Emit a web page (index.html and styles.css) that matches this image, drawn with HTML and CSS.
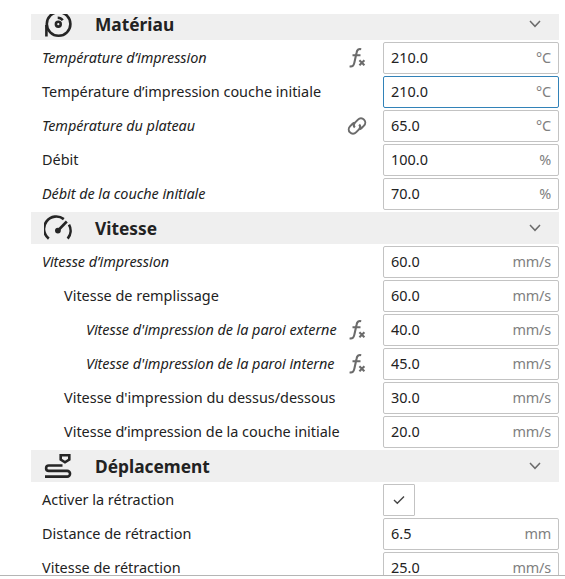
FILE: index.html
```
<!DOCTYPE html>
<html lang="fr">
<head>
  <meta charset="UTF-8">
  <meta name="viewport" content="width=device-width, initial-scale=1.0">
  <title>Paramètres d'impression</title>
  <link rel="stylesheet" href="styles.css">
</head>
<body>
  <svg class="sprite">
    <symbol id="chevron" viewBox="0 0 12 8"><path d="M1 1l5 5.300 5-5.300"/></symbol>
    <symbol id="fx" viewBox="0 0 18 22">
      <path d="M.6 19.300c2.800.6 4.100-.5 4.700-3.400L7.500 6C8.100 2.800 9.500 1.600 12.200 2.200M3.500 8.300h8M10.400 13.300l5 5M15.400 13.300l-5 5"/>
    </symbol>
    <symbol id="link" viewBox="0 0 20 20">
      <path d="M7.800 11.500C6.300 9.800 6.600 8 8 6.600l3-3a4.200 4.200 0 0 1 6 6l-2.600 2.600c-1 1-2 1.300-3.200 1.100M12.200 8.500C13.700 10.200 13.400 12 12 13.400l-3 3a4.200 4.200 0 0 1-6-6l2.600-2.600c1-1 2-1.300 3.200-1.100"/>
    </symbol>
  </svg>

  <div class="settings">
    <div class="list">
      <div class="category">
        <svg class="category-icon" viewBox="0 0 28 28">
          <circle cx="14.600" cy="14" r="11.800"/>
          <path d="M2.400 15v11.500"/>
          <circle cx="14.300" cy="14.200" r="2.400"/>
          <path d="M13.700 7.800c2 0 3.800.8 5 2.400"/>
        </svg>
        <h2>Matériau</h2>
        <svg class="chevron"><use href="#chevron"/></svg>
      </div>
      <div class="setting changed">
        <label>Température d’impression</label>
        <svg class="fx"><use href="#fx"/></svg>
        <div class="field"><span>210.0</span><span class="unit">°C</span></div>
      </div>
      <div class="setting">
        <label>Température d’impression couche initiale</label>
        <div class="field active"><span>210.0</span><span class="unit">°C</span></div>
      </div>
      <div class="setting changed">
        <label>Température du plateau</label>
        <svg class="link"><use href="#link"/></svg>
        <div class="field"><span>65.0</span><span class="unit">°C</span></div>
      </div>
      <div class="setting">
        <label>Débit</label>
        <div class="field"><span>100.0</span><span class="unit">%</span></div>
      </div>
      <div class="setting changed">
        <label>Débit de la couche initiale</label>
        <div class="field"><span>70.0</span><span class="unit">%</span></div>
      </div>

      <div class="category">
        <svg class="category-icon" viewBox="0 0 28 28">
          <path d="M4.800 24.600A12.300 12.300 0 0 1 19.800 5.100M25 10.700A12.300 12.300 0 0 1 23.700 24.600"/>
          <path d="M14 16.500l8.800-9"/>
          <circle class="solid" cx="13.900" cy="16.600" r="2.900"/>
        </svg>
        <h2>Vitesse</h2>
        <svg class="chevron"><use href="#chevron"/></svg>
      </div>
      <div class="setting changed">
        <label>Vitesse d’impression</label>
        <div class="field"><span>60.0</span><span class="unit">mm/s</span></div>
      </div>
      <div class="setting level-1">
        <label>Vitesse de remplissage</label>
        <div class="field"><span>60.0</span><span class="unit">mm/s</span></div>
      </div>
      <div class="setting level-2 changed">
        <label>Vitesse d'impression de la paroi externe</label>
        <svg class="fx"><use href="#fx"/></svg>
        <div class="field"><span>40.0</span><span class="unit">mm/s</span></div>
      </div>
      <div class="setting level-2 changed">
        <label>Vitesse d'impression de la paroi interne</label>
        <svg class="fx"><use href="#fx"/></svg>
        <div class="field"><span>45.0</span><span class="unit">mm/s</span></div>
      </div>
      <div class="setting level-1">
        <label>Vitesse d'impression du dessus/dessous</label>
        <div class="field"><span>30.0</span><span class="unit">mm/s</span></div>
      </div>
      <div class="setting level-1">
        <label>Vitesse d’impression de la couche initiale</label>
        <div class="field"><span>20.0</span><span class="unit">mm/s</span></div>
      </div>

      <div class="category">
        <svg class="category-icon" viewBox="0 0 28 28">
          <path d="M18.500 13.500H4.800a2.700 2.700 0 0 0 0 5.400h18.400a2.800 2.800 0 0 1 0 5.700H1"/>
          <path d="M16.700 3.300h8.600v4.200l-4.300 2.800-4.300-2.800z"/>
        </svg>
        <h2>Déplacement</h2>
        <svg class="chevron"><use href="#chevron"/></svg>
      </div>
      <div class="setting">
        <label>Activer la rétraction</label>
        <div class="checkbox"><svg viewBox="0 0 12 10"><path d="M1 5l3.300 3.200L11 1.500"/></svg></div>
      </div>
      <div class="setting">
        <label>Distance de rétraction</label>
        <div class="field"><span>6.5</span><span class="unit">mm</span></div>
      </div>
      <div class="setting">
        <label>Vitesse de rétraction</label>
        <div class="field"><span>25.0</span><span class="unit">mm/s</span></div>
      </div>
    </div>
  </div>
</body>
</html>
```
FILE: styles.css
```
* {
  margin: 0;
  padding: 0;
  box-sizing: border-box;
}

body {
  font-family: 'Noto Sans', sans-serif;
  font-size: 14.45px;
  color: #222;
  background: white;
  padding-top: 14px;
}

svg {
  fill: none;
  stroke: #6b6b6b;
  flex-shrink: 0;
}

.sprite {
  display: none;
}

/* scrolled viewport, first and last rows are cut off */
.settings {
  height: 562px;
  padding: 0 6px 0 31px;
  border-bottom: 1px solid #b5b5b5;
  overflow: hidden;
}

.list {
  display: flex;
  flex-direction: column;
  gap: 2px;
  margin-top: -6px;
}

.category {
  display: flex;
  align-items: center;
  height: 32px;
  padding: 0 18px 0 13px;
  background: #efefef;
}

.category-icon {
  width: 28px;
  height: 28px;
  stroke: #252525;
  stroke-width: 2.6;
}

.category-icon .solid {
  fill: #252525;
  stroke: none;
}

.category h2 {
  flex: 1;
  margin-left: 23px;
  font-size: 17.33px;
  font-weight: 700;
  line-height: 20px;
}

.chevron {
  width: 12px;
  height: 8px;
  stroke-width: 1.5;
}

.setting {
  display: flex;
  align-items: center;
  height: 32px;
  padding-left: 11px;
}

.level-1 {
  padding-left: 33px;
}

.level-2 {
  padding-left: 55px;
}

.setting label {
  flex: 1;
  padding-bottom: 2px;
  white-space: nowrap;
}

.changed label {
  font-style: italic;
  letter-spacing: -0.05px;
}

.fx {
  width: 18px;
  height: 22px;
  margin-right: 16px;
  stroke-width: 2.1;
}

.link {
  width: 20px;
  height: 20px;
  margin-right: 16px;
  stroke-width: 2;
}

.field {
  display: flex;
  align-items: center;
  justify-content: space-between;
  width: 176px;
  height: 32px;
  padding: 0 7px 2px;
  border: 1px solid #c3c3c3;
  border-radius: 2px;
}

.field.active {
  border-color: #3282b8;
}

.unit {
  color: #808080;
  letter-spacing: -0.2px;
}

.checkbox {
  display: flex;
  align-items: center;
  justify-content: center;
  width: 32px;
  height: 32px;
  margin-right: 144px;
  border: 1px solid #c3c3c3;
  border-radius: 1px;
}

.checkbox svg {
  width: 12px;
  height: 10px;
  margin-right: 1px;
  stroke: #444;
  stroke-width: 1.4;
}
```
